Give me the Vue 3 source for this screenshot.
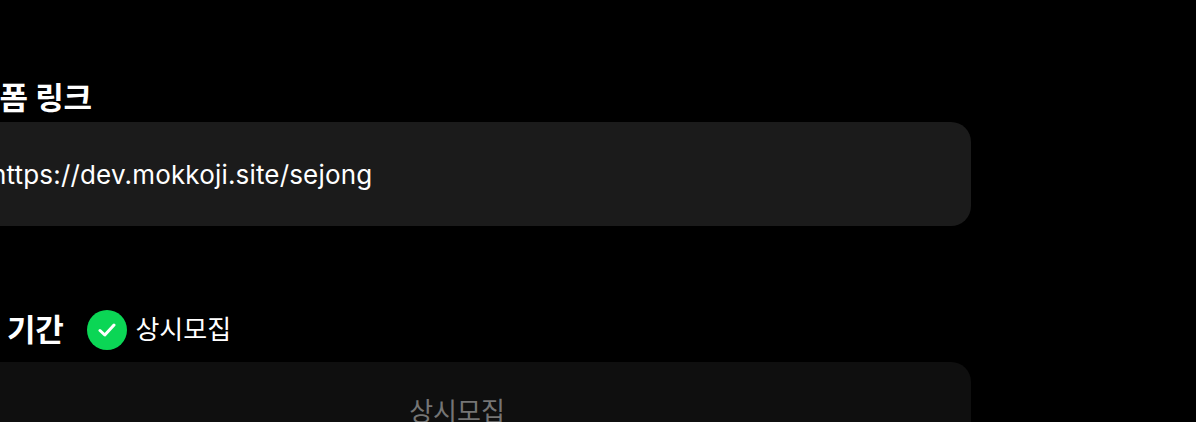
<script setup>
const link = 'https://dev.mokkoji.site/sejong'
</script>

<template>
  <div class="page">
    <section class="form">
      <div class="field">
        <div class="label-row link-label">
          <h3 class="label">지원폼 링크</h3>
        </div>
        <div class="box link-box">{{ link }}</div>
      </div>

      <div class="field">
        <div class="label-row">
          <h3 class="label">모집 기간</h3>
          <div class="always">
            <span class="check">
              <svg width="18" height="16" viewBox="0 0 18 16" fill="none">
                <path d="M2 8.5L6.8 13L16 3" stroke="#fff" stroke-width="3" stroke-linecap="round" stroke-linejoin="round" />
              </svg>
            </span>
            <span class="always-text">상시모집</span>
          </div>
        </div>
        <div class="box period-box">상시모집</div>
      </div>
    </section>
  </div>
</template>

<style scoped>
.page {
  width: 1196px;
  height: 422px;
  overflow: hidden;
  background: #000;
  color: #fff;
  font-family: Inter, "Noto Sans CJK KR", sans-serif;
}
.form {
  width: 1028px;
  margin-left: -57px;
  padding-top: 77px;
  display: flex;
  flex-direction: column;
  gap: 84px;
}
.label-row {
  display: flex;
  align-items: center;
  height: 40px;
  margin-bottom: 12px;
}
.link-label {
  height: 42px;
  margin-bottom: 3px;
}
.label {
  margin: 0;
  font-size: 31px;
  font-weight: 600;
  line-height: 40px;
  letter-spacing: -0.3px;
  white-space: nowrap;
}
.always {
  display: flex;
  align-items: center;
  gap: 8px;
  margin-left: 24px;
}
.check {
  width: 40px;
  height: 40px;
  border-radius: 50%;
  background: #0bd655;
  display: flex;
  align-items: center;
  justify-content: center;
}
.always-text {
  font-size: 26px;
  line-height: 36px;
}
.box {
  border-radius: 20px;
  display: flex;
  align-items: center;
  font-size: 26px;
}
.link-box {
  height: 104px;
  background: #1b1b1b;
  padding-left: 48px;
  letter-spacing: 0.17px;
}
.period-box {
  height: 94px;
  background: #0f0f0f;
  color: #757575;
  justify-content: center;
}
</style>

<style>
html, body { background: #000; overflow: hidden; }
</style>
